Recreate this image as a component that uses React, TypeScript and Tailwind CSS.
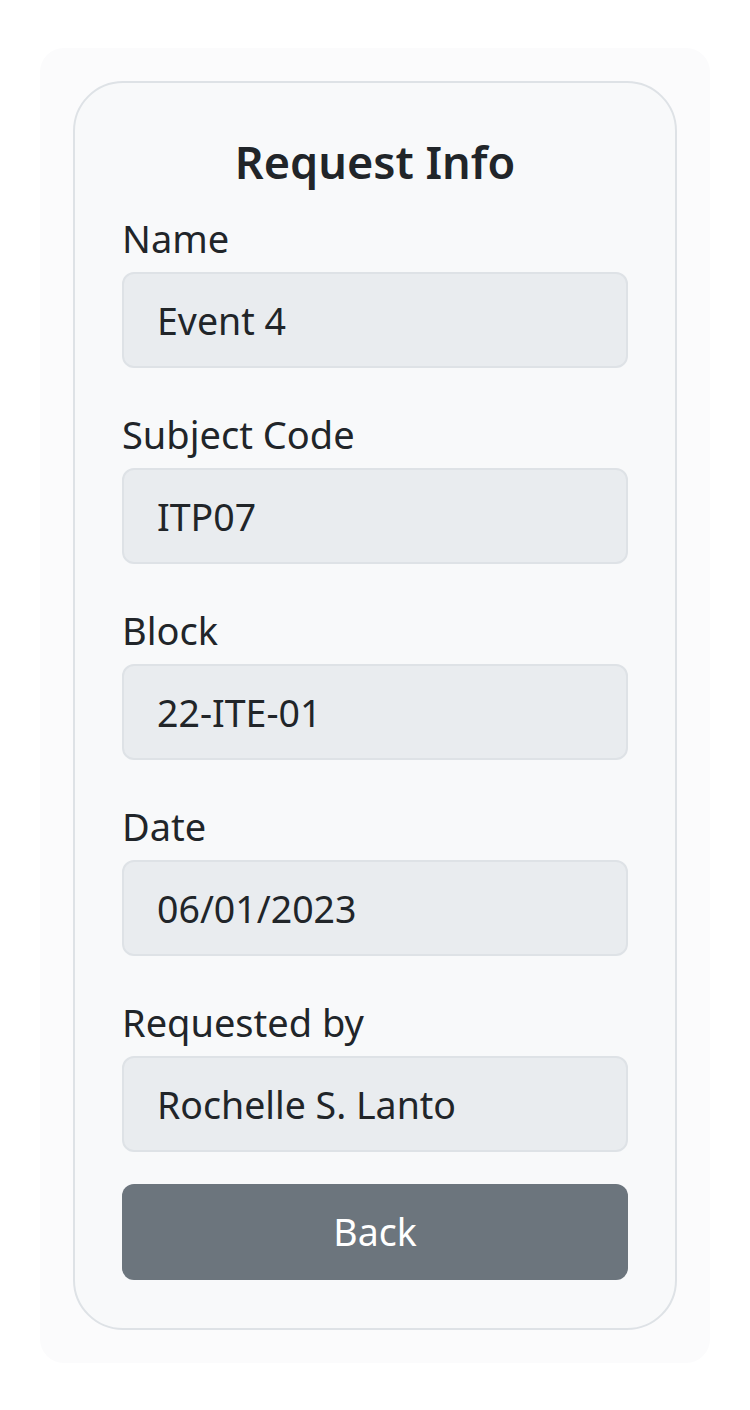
const fields = [
  { label: "Name", value: "Event 4" },
  { label: "Subject Code", value: "ITP07" },
  { label: "Block", value: "22-ITE-01" },
  { label: "Date", value: "06/01/2023" },
  { label: "Requested by", value: "Rochelle S. Lanto" },
];

export default function App() {
  return (
    <div className="min-h-[1410px] bg-white px-10 pt-12 font-['Noto_Sans',sans-serif] text-[#212529]">
      <div className="rounded-[24px] bg-[#fbfbfc] p-[33px]">
        <div className="rounded-[50px] border-2 border-[#dee2e6] bg-[#f8f9fa] px-[47px] pt-[52px] pb-[48px]">
          <h2 className="mb-[22px] text-center text-[45px] font-semibold leading-[1.2]">Request Info</h2>

          <div className="flex flex-col gap-[39px]">
            {fields.map((f) => (
              <div key={f.label}>
                <label className="mb-[7px] block text-[38px] leading-[54px]">{f.label}</label>
                <input
                  readOnly
                  value={f.value}
                  className="h-[96px] w-full rounded-[12px] border-2 border-[#dee2e6] bg-[#e9ecef] px-[33px] text-[37.5px] text-[#212529] outline-none"
                />
              </div>
            ))}
          </div>

          <button className="mt-[32px] h-[96px] w-full rounded-[12px] bg-[#6c757d] text-[37.5px] text-white">
            Back
          </button>
        </div>
      </div>
    </div>
  );
}
